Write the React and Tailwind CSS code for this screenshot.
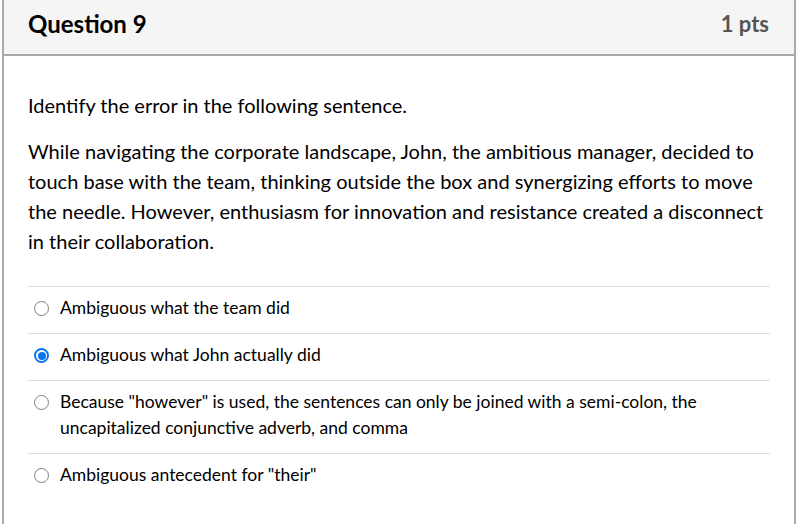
import React, { useState } from 'react';

const answers = [
  'Ambiguous what the team did',
  'Ambiguous what John actually did',
  'Because "however" is used, the sentences can only be joined with a semi-colon, the uncapitalized conjunctive adverb, and comma',
  'Ambiguous antecedent for "their"',
];

function Radio({ checked }) {
  if (checked) {
    return (
      <span className="mt-[6px] flex h-[15px] w-[15px] shrink-0 items-center justify-center rounded-full border-2 border-[#0b74f0] bg-white">
        <span className="h-[8px] w-[8px] rounded-full bg-[#0b74f0]" />
      </span>
    );
  }
  return <span className="mt-[6px] h-[15px] w-[15px] shrink-0 rounded-full border-[1.5px] border-[#808080] bg-white" />;
}

export default function App() {
  const [selected, setSelected] = useState(1);

  return (
    <div className="h-[524px] w-[808px] bg-white pl-[2px] font-['Lato','Liberation_Sans',sans-serif] text-[#2d3b45]">
      <div className="h-full w-[794px] border-x-2 border-[#a9a9a9]">
        {/* Header */}
        <div className="flex h-[56px] items-start justify-between border-b-2 border-[#a9a9a9] bg-[#f5f5f5] pl-[24px] pr-[25px] pt-[9px]">
          <h2 className="text-[24px] leading-[30px] font-bold text-black">Question 9</h2>
          <span className="text-[22px] leading-[30px] font-bold text-[#555]">1 pts</span>
        </div>

        {/* Body */}
        <div className="px-[24px] pt-[34px] text-[20px] leading-[30px] text-black">
          <p>Identify the error in the following sentence.</p>
          <p className="mt-[16px]">
            While navigating the corporate landscape, John, the ambitious manager, decided to touch base with the team,
            thinking outside the box and synergizing efforts to move the needle. However, enthusiasm for innovation and
            resistance created a disconnect in their collaboration.
          </p>
        </div>

        {/* Answers */}
        <div className="mt-[30px] px-[24px]">
          {answers.map((a, i) => (
            <label
              key={i}
              onClick={() => setSelected(i)}
              className="flex cursor-pointer gap-[11px] border-t border-[#dcdcdc] pt-[8px] pb-[12px] pl-[6px] pr-[60px] text-[17.5px] leading-[26px] text-black"
            >
              <Radio checked={selected === i} />
              <span>{a}</span>
            </label>
          ))}
        </div>
      </div>
    </div>
  );
}
